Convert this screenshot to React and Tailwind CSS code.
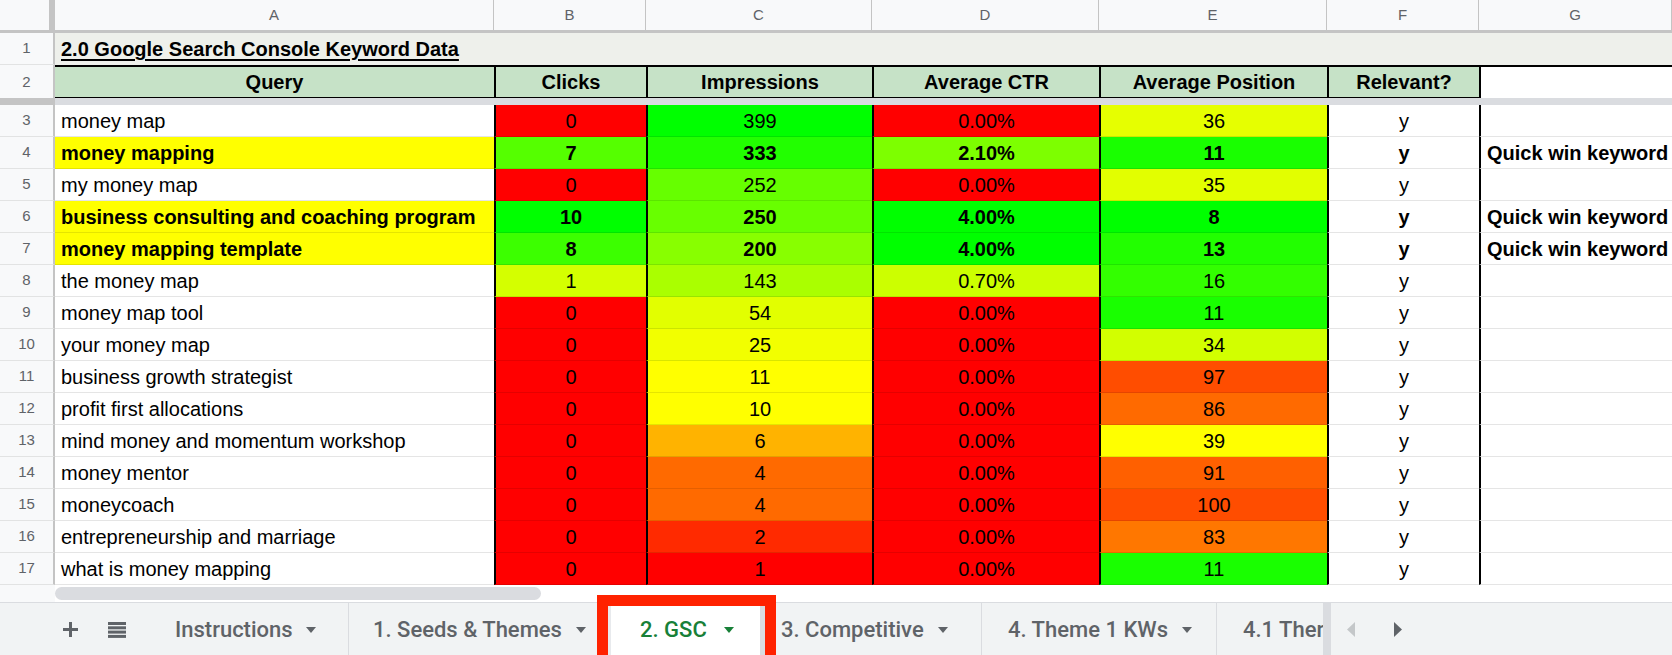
import React from 'react'

const COLS = 'grid grid-cols-[55px_439px_152px_226px_227px_228px_152px_193px]'

const RED = 'bg-[#ff0000]'

const rows = [
  { n: 3, q: 'money map', b: ['0', RED], c: ['399', 'bg-[#00ff00]'], d: ['0.00%', RED], e: ['36', 'bg-[#e6ff00]'] },
  { n: 4, q: 'money mapping', hl: true, b: ['7', 'bg-[#55ff00]'], c: ['333', 'bg-[#22ff00]'], d: ['2.10%', 'bg-[#7dff00]'], e: ['11', 'bg-[#19ff00]'], g: 'Quick win keyword' },
  { n: 5, q: 'my money map', b: ['0', RED], c: ['252', 'bg-[#66ff00]'], d: ['0.00%', RED], e: ['35', 'bg-[#e2ff00]'] },
  { n: 6, q: 'business consulting and coaching program', hl: true, b: ['10', 'bg-[#00ff00]'], c: ['250', 'bg-[#68ff00]'], d: ['4.00%', 'bg-[#00ff00]'], e: ['8', 'bg-[#00ff00]'], g: 'Quick win keyword' },
  { n: 7, q: 'money mapping template', hl: true, b: ['8', 'bg-[#3cff00]'], c: ['200', 'bg-[#88ff00]'], d: ['4.00%', 'bg-[#00ff00]'], e: ['13', 'bg-[#22ff00]'], g: 'Quick win keyword' },
  { n: 8, q: 'the money map', b: ['1', 'bg-[#d4ff00]'], c: ['143', 'bg-[#aaff00]'], d: ['0.70%', 'bg-[#ccff00]'], e: ['16', 'bg-[#33ff00]'] },
  { n: 9, q: 'money map tool', b: ['0', RED], c: ['54', 'bg-[#e2ff00]'], d: ['0.00%', RED], e: ['11', 'bg-[#19ff00]'] },
  { n: 10, q: 'your money map', b: ['0', RED], c: ['25', 'bg-[#f2ff00]'], d: ['0.00%', RED], e: ['34', 'bg-[#d2ff00]'] },
  { n: 11, q: 'business growth strategist', b: ['0', RED], c: ['11', 'bg-[#ffff00]'], d: ['0.00%', RED], e: ['97', 'bg-[#ff4d00]'] },
  { n: 12, q: 'profit first allocations', b: ['0', RED], c: ['10', 'bg-[#ffff00]'], d: ['0.00%', RED], e: ['86', 'bg-[#ff6a00]'] },
  { n: 13, q: 'mind money and momentum workshop', b: ['0', RED], c: ['6', 'bg-[#ffb300]'], d: ['0.00%', RED], e: ['39', 'bg-[#ffff00]'] },
  { n: 14, q: 'money mentor', b: ['0', RED], c: ['4', 'bg-[#ff6a00]'], d: ['0.00%', RED], e: ['91', 'bg-[#ff6000]'] },
  { n: 15, q: 'moneycoach', b: ['0', RED], c: ['4', 'bg-[#ff6a00]'], d: ['0.00%', RED], e: ['100', 'bg-[#ff4d00]'] },
  { n: 16, q: 'entrepreneurship and marriage', b: ['0', RED], c: ['2', 'bg-[#ff2a00]'], d: ['0.00%', RED], e: ['83', 'bg-[#ff7700]'] },
  { n: 17, q: 'what is money mapping', b: ['0', RED], c: ['1', 'bg-[#ff0000]'], d: ['0.00%', RED], e: ['11', 'bg-[#19ff00]'] },
]

function RowHead({ children, className = '' }) {
  return (
    <div className={`flex items-center justify-center bg-[#f8f9fa] border-r-2 border-r-[#c4c4c4] border-b border-b-[#e2e3e3] text-[15px] font-normal text-[#5f6368] ${className}`}>
      {children}
    </div>
  )
}

function Cell({ v, bg = 'bg-white' }) {
  return (
    <div className={`flex items-center justify-center border-l-2 border-l-black border-b border-b-black/10 ${bg}`}>
      {v}
    </div>
  )
}

function BodyRow({ r }) {
  return (
    <div className={`${COLS} h-[32px] ${r.hl ? 'font-bold' : ''}`}>
      <RowHead>{r.n}</RowHead>
      <div className={`flex items-center pl-[6px] border-b border-b-black/10 whitespace-nowrap ${r.hl ? 'bg-[#ffff00]' : 'bg-white'}`}>{r.q}</div>
      <Cell v={r.b[0]} bg={r.b[1]} />
      <Cell v={r.c[0]} bg={r.c[1]} />
      <Cell v={r.d[0]} bg={r.d[1]} />
      <Cell v={r.e[0]} bg={r.e[1]} />
      <Cell v="y" />
      <div className="flex items-center pl-[6px] border-l-2 border-l-black border-b border-b-black/10 bg-white whitespace-nowrap overflow-hidden">{r.g}</div>
    </div>
  )
}

function Caret({ className = 'fill-[#5f6368]' }) {
  return (
    <svg width="10" height="6" viewBox="0 0 10 6" className={className}>
      <path d="M0 0h10L5 6z" />
    </svg>
  )
}

export default function App() {
  const letters = ['A', 'B', 'C', 'D', 'E', 'F', 'G']
  const heads = ['Query', 'Clicks', 'Impressions', 'Average CTR', 'Average Position', 'Relevant?']
  return (
    <div className="w-[1672px] h-[655px] overflow-hidden bg-white font-['Liberation_Sans',Arial,sans-serif] text-[20px] text-black">
      {/* column letters */}
      <div className={`${COLS} h-[33px] bg-[#f8f9fa] border-b-[3px] border-b-[#c4c4c4] text-[15px] text-[#5f6368]`}>
        <div className="border-r-[6px] border-r-[#c4c4c4]" />
        {letters.map((l) => (
          <div key={l} className="flex items-center justify-center border-r border-r-[#c4c4c4]">{l}</div>
        ))}
      </div>

      {/* row 1 */}
      <div className={`${COLS} h-[32px] bg-[#eef0eb]`}>
        <RowHead className="bg-[#f8f9fa]">1</RowHead>
        <div className="col-span-7 flex items-center pl-[6px] font-bold underline decoration-2 underline-offset-[3px] whitespace-nowrap">
          2.0 Google Search Console Keyword Data
        </div>
      </div>

      {/* row 2 */}
      <div className={`${COLS} h-[33px] font-bold`}>
        <RowHead className="border-b-0">2</RowHead>
        {heads.map((h, i) => (
          <div
            key={h}
            className={`flex items-center justify-center bg-[#c6e2c7] border-y-2 border-y-black ${i > 0 ? 'border-l-2 border-l-black' : ''}`}
          >
            {h}
          </div>
        ))}
        <div className="bg-white border-l-2 border-l-black border-t-2 border-t-black border-b border-b-[#e2e3e3]" />
      </div>

      {/* frozen divider */}
      <div className="flex h-[7px]">
        <div className="w-[55px] bg-[#c4c4c4]" />
        <div className="flex-1 bg-[#dadce0]" />
      </div>

      {rows.map((r) => (
        <BodyRow key={r.n} r={r} />
      ))}

      {/* scrollbar strip */}
      <div className="flex h-[17px]">
        <div className="w-[55px] bg-[#f8f9fa]" />
        <div className="flex-1 pt-[2px]">
          <div className="w-[486px] h-[13px] rounded-full bg-[#dadce0]" />
        </div>
      </div>

      {/* sheet tabs */}
      <div className="relative h-[54px] bg-[#f1f3f4] border-t border-t-[#dadce0] flex items-stretch font-['Roboto',sans-serif] text-[22px] font-medium text-[#5f6368] whitespace-nowrap">
        <div className="flex items-center pl-[63px]">
          <svg width="15" height="15" viewBox="0 0 15 15" className="fill-[#5f6368]">
            <rect x="6" y="0" width="3" height="15" />
            <rect x="0" y="6" width="15" height="3" />
          </svg>
          <svg width="18" height="16" viewBox="0 0 18 16" className="fill-[#5f6368] ml-[30px]">
            <rect x="0" y="0" width="18" height="3" />
            <rect x="0" y="4.3" width="18" height="3" />
            <rect x="0" y="8.6" width="18" height="3" />
            <rect x="0" y="12.9" width="18" height="3" />
          </svg>
        </div>
        <div className="ml-[24px] w-[199px] pl-[25px] flex items-center gap-[13px] border-r border-r-[#dadce0]">
          Instructions <Caret />
        </div>
        <div className="w-[259px] pl-[24px] flex items-center gap-[14px]">
          1. Seeds &amp; Themes <Caret />
        </div>
        <div className="w-[157px] pl-[29px] flex items-center gap-[17px] bg-white text-[#188038] border-l-[3px] border-l-[#e8eaed] border-r-[5px] border-r-[#dadce0]">
          2. GSC <Caret className="fill-[#188038]" />
        </div>
        <div className="w-[217px] pl-[16px] flex items-center gap-[14px] border-r border-r-[#dadce0]">
          3. Competitive <Caret />
        </div>
        <div className="w-[235px] pl-[26px] flex items-center gap-[14px] border-r border-r-[#dadce0]">
          4. Theme 1 KWs <Caret />
        </div>
        <div className="w-[106px] pl-[26px] flex items-center">4.1 Ther</div>
        <div className="w-[8px] bg-[#dadce0]" />
        <div className="flex items-center pl-[16px] gap-[39px]">
          <svg width="8" height="15" viewBox="0 0 8 15" className="fill-[#c4c7c9]">
            <path d="M8 0v15L0 7.5z" />
          </svg>
          <svg width="8" height="15" viewBox="0 0 8 15" className="fill-[#5f6368]">
            <path d="M0 0v15l8-7.5z" />
          </svg>
        </div>

        {/* annotation box around the active tab */}
        <div className="absolute left-[597px] top-[-8px] w-[179px] h-[80px] border-[11px] border-[#ff2200] pointer-events-none" />
      </div>
    </div>
  )
}
